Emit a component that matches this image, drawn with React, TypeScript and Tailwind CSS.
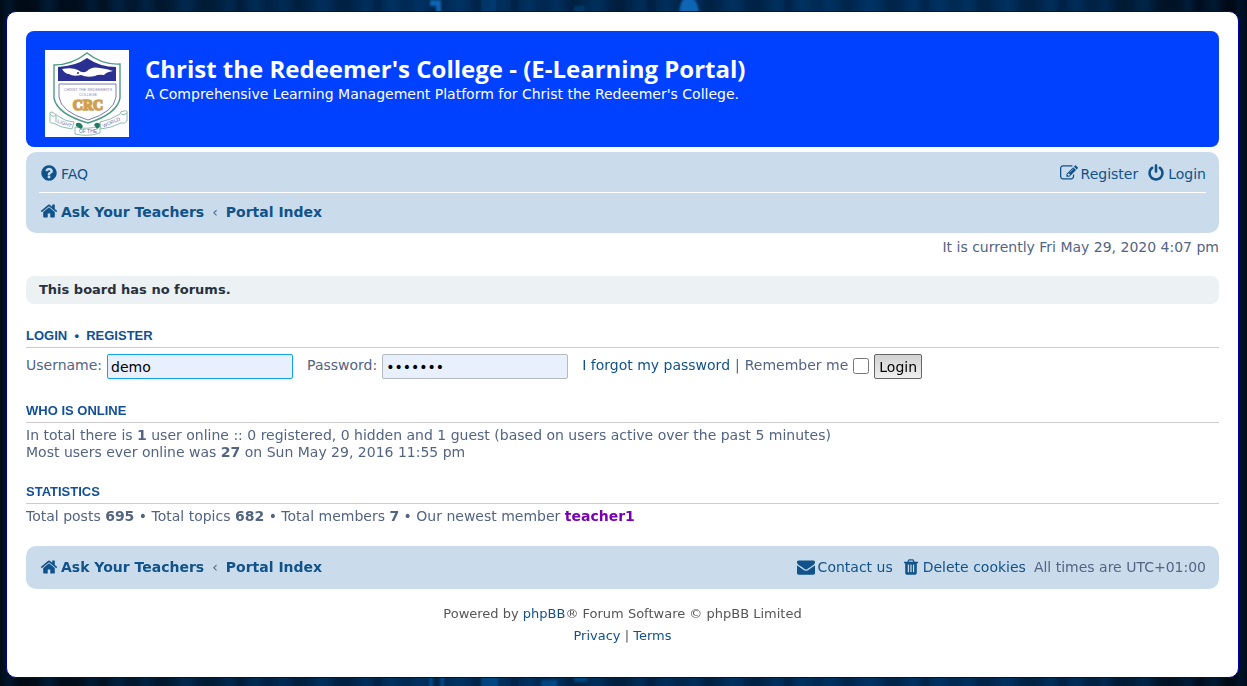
import { useState } from 'react';
import type { ReactNode } from 'react';

// 1792-unit glyph outlines, shared by the nav bars
const ICONS = {
  question:
    'M1024 1376v-192q0-14-9-23t-23-9h-192q-14 0-23 9t-9 23v192q0 14 9 23t23 9h192q14 0 23-9t9-23zm256-672q0-88-55.5-163t-138.5-116-170-41q-243 0-371 213-15 24 8 42l132 100q7 6 19 6 16 0 25-12 53-68 86-92 34-24 86-24 48 0 85.5 26t37.5 59q0 38-20 61t-68 45q-63 28-115.5 86.5t-52.5 125.5v36q0 14 9 23t23 9h192q14 0 23-9t9-23q0-19 21.5-49.5t54.5-49.5q32-18 49-28.5t46-35 44.5-48 28-60.5 12.5-81zm384 192q0 209-103 385.5t-279.5 279.5-385.5 103-385.5-103-279.5-279.5-103-385.5 103-385.5 279.5-279.5 385.5-103 385.5 103 279.5 279.5 103 385.5z',
  home: 'M1472 992v480q0 26-19 45t-45 19h-384v-384h-256v384h-384q-26 0-45-19t-19-45v-480q0-1 .5-3t.5-3l575-474 575 474q1 2 1 6zm223-69l-62 74q-8 9-21 11h-3q-13 0-21-7l-692-577-692 577q-12 8-24 7-13-2-21-11l-62-74q-8-10-7-23.5t11-21.5l719-599q32-26 76-26t76 26l244 204v-195q0-14 9-23t23-9h192q14 0 23 9t9 23v408l219 182q10 8 11 21.5t-7 23.5z',
  register:
    'M888 1184l116-116-152-152-116 116v56h96v96h56zm440-720q-16-16-33 1l-350 350q-17 17-1 33t33-1l350-350q17-17 1-33zm80 594v190q0 119-84.5 203.5t-203.5 84.5h-832q-119 0-203.5-84.5t-84.5-203.5v-832q0-119 84.5-203.5t203.5-84.5h832q63 0 117 25 15 7 18 23 3 17-9 29l-49 49q-14 14-32 8-23-6-45-6h-832q-66 0-113 47t-47 113v832q0 66 47 113t113 47h832q66 0 113-47t47-113v-126q0-13 9-22l64-64q15-15 35-7t20 29zm-96-738l288 288-672 672h-288v-288zm444 132l-92 92-288-288 92-92q28-28 68-28t68 28l152 152q28 28 28 68t-28 68z',
  power:
    'M1664 896q0 156-61 298t-164 245-245 164-298 61-298-61-245-164-164-245-61-298q0-182 80.5-343t226.5-270q43-32 95.5-25t83.5 50q32 42 24.5 94.5t-49.5 84.5q-98 74-151.5 181t-53.5 228q0 104 40.5 198.5t109.5 163.5 163.5 109.5 198.5 40.5 198.5-40.5 163.5-109.5 109.5-163.5 40.5-198.5q0-121-53.5-228t-151.5-181q-42-32-49.5-84.5t24.5-94.5q31-43 84-50t95 25q146 109 226.5 270t80.5 343zm-640-768v640q0 52-38 90t-90 38-90-38-38-90v-640q0-52 38-90t90-38 90 38 38 90z',
  envelope:
    'M1792 710v794q0 66-47 113t-113 47h-1472q-66 0-113-47t-47-113v-794q44 49 101 87 362 246 497 345 57 42 92.5 65.5t94.5 48 110 24.5h2q51 0 110-24.5t94.5-48 92.5-65.5q170-123 498-345 57-39 100-87zm0-294q0 79-49 151t-122 123q-376 261-468 325-10 7-42.5 31t-54 38.5-52 32.5-57.5 27-50 9h-2q-23 0-50-9t-57.5-27-52-32.5-54-38.5-42.5-31q-91-64-262-182.5t-205-142.5q-62-42-117-115.5t-55-136.5q0-78 41.5-130t118.5-52h1472q65 0 112.5 47t47.5 113z',
  trash:
    'M704 1376v-704q0-14-9-23t-23-9h-64q-14 0-23 9t-9 23v704q0 14 9 23t23 9h64q14 0 23-9t9-23zm256 0v-704q0-14-9-23t-23-9h-64q-14 0-23 9t-9 23v704q0 14 9 23t23 9h64q14 0 23-9t9-23zm256 0v-704q0-14-9-23t-23-9h-64q-14 0-23 9t-9 23v704q0 14 9 23t23 9h64q14 0 23-9t9-23zm-544-992h448l-48-117q-7-9-17-11h-317q-10 2-17 11zm928 32v64q0 14-9 23t-23 9h-96v948q0 83-47 143.5t-113 60.5h-832q-66 0-113-58.5t-47-141.5v-952h-96q-14 0-23-9t-9-23v-64q0-14 9-23t23-9h309l70-167q15-37 54-63t79-26h320q40 0 79 26t54 63l70 167h309q14 0 23 9t9 23z',
};

type IconName = keyof typeof ICONS;

const Icon = ({ name }: { name: IconName }) => (
  <svg viewBox="0 0 1792 1792" className="mb-0.5 ml-px h-[18px] w-[18px] shrink-0" fill="currentColor" aria-hidden="true">
    <path d={ICONS[name]} />
  </svg>
);

const NavLink = ({ icon, children }: { icon: IconName; children: ReactNode }) => (
  <a href="#" className="flex items-center gap-[3px] text-[#105289] hover:underline">
    <Icon name={icon} />
    {children}
  </a>
);

const Breadcrumbs = () => (
  <nav aria-label="Breadcrumbs" className="flex items-center font-bold">
    <NavLink icon="home">Ask Your Teachers</NavLink>
    <span className="px-2 font-normal text-[#536482]">‹</span>
    <a href="#" className="text-[#105289] hover:underline">
      Portal Index
    </a>
  </nav>
);

const Section = ({ title, children }: { title: ReactNode; children: ReactNode }) => (
  <section className="mb-[21px]">
    <h3 className="mb-1 border-b border-[#cccccc] pb-[3px] font-['Liberation_Sans',Arial,sans-serif] text-[13px] leading-4 font-bold text-[#115098] uppercase">
      {title}
    </h3>
    {children}
  </section>
);

const Crest = () => (
  <svg viewBox="0 0 84 87" className="h-[87px] w-[84px] shrink-0 bg-[#fdfdfd]" role="img" aria-label="College crest">
    <path
      d="M9 15Q27 15 42 3Q57 15 75 14V48Q72 64 43 73Q12 64 9 48Z"
      fill="#fff"
      stroke="#4f9a86"
      strokeWidth="1.4"
    />
    <path d="M13 31V17Q31 16 42 8Q55 17 71 17V31Z" fill="#2a2f92" />
    <path
      d="M17 19Q27 17 33 20Q38 24 42 21Q47 16 55 18Q63 19 68 21Q61 22 59 25Q53 24 50 26Q42 28 36 25Q28 27 24 24Q20 24 17 19Z"
      fill="#fff"
    />
    <circle cx="33" cy="23" r="1" fill="#333" />
    <path d="M14 34H71V47Q69 62 43 70Q16 62 14 47Z" fill="none" stroke="#7a7abb" strokeWidth="1" />
    <g fill="#8a8ac0" fontFamily="'Liberation Sans', Arial, sans-serif" fontSize="3.8" textAnchor="middle">
      <text x="43" y="41">CHRIST THE REDEEMER'S</text>
      <text x="43" y="46">COLLEGE</text>
    </g>
    <text
      x="43"
      y="60"
      fill="#d0a050"
      stroke="#d0a050"
      strokeWidth="1.6"
      fontFamily="'Liberation Serif', serif"
      fontWeight="bold"
      fontSize="14"
      textAnchor="middle"
    >
      CRC
    </text>
    {/* ribbon */}
    <g fill="#fff" stroke="#8fbdb1" strokeWidth="1">
      <path d="M5 64Q4 62 7 62L13 66Q21 72 29 72L27 79Q17 78 8 73Q4 74 5 70Z" />
      <path d="M79 61Q83 60 82 64V71Q80 74 76 73Q66 78 56 79L55 72Q66 70 75 64Q75 61 79 61Z" />
      <path d="M5 64Q8 68 11 65V72M76 64Q79 66 82 63" fill="none" />
      <path d="M30 77Q42 80 55 76V83Q43 87 30 84Z" />
    </g>
    <path d="M31 76Q30 72 35 73Q40 76 36 79ZM49 75Q51 71 55 74Q55 78 52 79Z" fill="#1d7c61" />
    <g fill="#6c6cae" fontFamily="'Liberation Sans', Arial, sans-serif" fontSize="5" textAnchor="middle">
      <text transform="translate(19 75) rotate(20)">LIGHT</text>
      <text x="43" y="83">OF THE</text>
      <text transform="translate(67 74) rotate(-24)">WORLD</text>
    </g>
  </svg>
);

// dark "digital rain" backdrop; only its edges show around the page
const Backdrop = () => (
  <svg
    viewBox="0 0 1247 686"
    preserveAspectRatio="none"
    className="absolute inset-0 -z-10 h-full w-full"
    aria-hidden="true"
  >
    <defs>
      <linearGradient id="base">
        <stop offset="0" stopColor="#000a14" />
        <stop offset=".06" stopColor="#001020" />
        <stop offset=".15" stopColor="#001f3c" />
        <stop offset=".35" stopColor="#002c58" />
        <stop offset=".5" stopColor="#00254a" />
        <stop offset=".7" stopColor="#002c58" />
        <stop offset=".85" stopColor="#00274e" />
        <stop offset=".95" stopColor="#001428" />
        <stop offset="1" stopColor="#000610" />
      </linearGradient>
      <pattern id="streaks" width="137" height="686" patternUnits="userSpaceOnUse">
        <path d="M4 0h9v686h-9zM41 0h14v686h-14zM88 0h7v686h-7zM112 0h12v686h-12z" fill="#0058a8" opacity=".16" />
        <path d="M20 0h11v686h-11zM62 0h17v686h-17zM99 0h8v686h-8z" fill="#000" opacity=".16" />
      </pattern>
      <filter id="soft">
        <feGaussianBlur stdDeviation="1" />
      </filter>
      <filter id="softer">
        <feGaussianBlur stdDeviation="3 0" />
      </filter>
    </defs>
    <rect width="1247" height="686" fill="url(#base)" />
    <rect width="1247" height="686" fill="url(#streaks)" filter="url(#softer)" />
    <g fill="#0b65b4" filter="url(#soft)">
      <path d="M430 0h11v14h-5v-8h-6zM679 14q1-14 6-16h7q6 2 7 16z" />
      <path d="M481 -2h15v16h-15zM574 6h11v8h-11z" opacity=".3" />
      <path d="M429 676h4v12h-4zM440 676h4v12h-4zM481 676h17v12h-17zM541 680h16v8h-16zM574 674h13v8h-13z" opacity=".5" />
    </g>
  </svg>
);

const inputClass =
  "h-[25px] w-[186px] rounded-xs border bg-[#e8f0fe] px-[3px] font-['DejaVu_Sans',Verdana,sans-serif] text-[14px] text-black outline-none focus:border-[#11a3ea]";

export default function App() {
  const [username, setUsername] = useState('demo');
  const [password, setPassword] = useState('teacher');
  const [remember, setRemember] = useState(false);

  return (
    <div className="relative isolate min-h-screen pt-[11px] pr-2 pb-2 pl-1.5 font-['DejaVu_Sans',Verdana,sans-serif] text-[14px] leading-[17px] text-[#536482]">
      <Backdrop />
      <div className="rounded-[10px] border border-[#0000a8] bg-white px-[19px] pt-[19px] pb-[30px]">
        <header className="mb-[5px] flex gap-4 rounded-lg bg-[#0040ff] px-[19px] pt-[19px] pb-2.5 text-white">
          <a href="#">
            <Crest />
          </a>
          <div className="pt-1">
            <h1 className="mb-0.5 font-['Trebuchet_MS','Open_Sans',sans-serif] text-[24px] leading-[30px] font-bold">
              Christ the Redeemer's College - (E-Learning Portal)
            </h1>
            <p>A Comprehensive Learning Management Platform for Christ the Redeemer's College.</p>
          </div>
        </header>

        <div className="rounded-[10px] bg-[#cadceb] px-[13px] pb-0.5">
          <div className="flex h-[41px] items-center justify-between border-b border-white pt-1">
            <NavLink icon="question">FAQ</NavLink>
            <div className="flex gap-2">
              <NavLink icon="register">Register</NavLink>
              <NavLink icon="power">Login</NavLink>
            </div>
          </div>
          <div className="flex h-[38px] items-center">
            <Breadcrumbs />
          </div>
        </div>

        <p className="mt-1.5 mb-5 text-right">It is currently Fri May 29, 2020 4:07 pm</p>

        <div className="mb-6 rounded-lg bg-[#ecf1f3] px-[13px] py-[6px] text-[13px] leading-4 font-bold text-[#28313f]">
          This board has no forums.
        </div>

        <Section
          title={
            <>
              <a href="#">Login</a>&nbsp; • &nbsp;<a href="#">Register</a>
            </>
          }
        >
          <form className="flex items-start pt-0.5 pb-[3px] leading-[22px]" onSubmit={(e) => e.preventDefault()}>
            <label htmlFor="username" className="mr-[5px]">
              Username:
            </label>
            <input
              id="username"
              className={`${inputClass} mr-3.5 border-[#11a3ea]`}
              value={username}
              autoFocus
              onChange={(e) => setUsername(e.target.value)}
            />
            <label htmlFor="password" className="mr-[5px]">
              Password:
            </label>
            <input
              id="password"
              type="password"
              className={`${inputClass} mr-3.5 border-[#b4bac0]`}
              value={password}
              onChange={(e) => setPassword(e.target.value)}
            />
            <a href="#" className="text-[#105289] hover:underline">
              I forgot my password
            </a>
            <span className="px-[5px]">|</span>
            <label htmlFor="remember">Remember me</label>
            <input
              id="remember"
              type="checkbox"
              className="mx-[5px] mt-1 h-4 w-4"
              checked={remember}
              onChange={(e) => setRemember(e.target.checked)}
            />
            <button
              type="submit"
              className="h-[25px] rounded-xs border border-[#666666] bg-linear-to-b from-[#d2d2d2] to-[#efefef] px-1 text-black"
            >
              Login
            </button>
          </form>
        </Section>

        <Section title="Who is online">
          <p>
            In total there is <strong>1</strong> user online :: 0 registered, 0 hidden and 1 guest (based on users active
            over the past 5 minutes)
          </p>
          <p className="pb-0.5">
            Most users ever online was <strong>27</strong> on Sun May 29, 2016 11:55 pm
          </p>
        </Section>

        <Section title="Statistics">
          <p>
            Total posts <strong>695</strong> • Total topics <strong>682</strong> • Total members <strong>7</strong> • Our
            newest member{' '}
            <a href="#" className="font-bold text-[#7a00b4] hover:underline">
              teacher1
            </a>
          </p>
        </Section>

        <footer>
          <div className="flex h-[43px] items-center justify-between rounded-[10px] bg-[#cadceb] px-[13px]">
            <Breadcrumbs />
            <div className="flex items-center gap-2">
              <NavLink icon="envelope">Contact us</NavLink>
              <NavLink icon="trash">Delete cookies</NavLink>
              <span>All times are UTC+01:00</span>
            </div>
          </div>
          <div className="pt-3.5 text-center text-[13px] leading-[22px] text-[#555555]">
            <p>
              Powered by{' '}
              <a href="#" className="text-[#105289]">
                phpBB
              </a>
              ® Forum Software © phpBB Limited
            </p>
            <p>
              <a href="#" className="text-[#105289]">
                Privacy
              </a>{' '}
              |{' '}
              <a href="#" className="text-[#105289]">
                Terms
              </a>
            </p>
          </div>
        </footer>
      </div>
    </div>
  );
}
